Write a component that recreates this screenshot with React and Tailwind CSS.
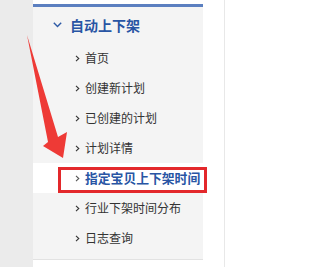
import React from "react";

const items = [
  "首页",
  "创建新计划",
  "已创建的计划",
  "计划详情",
  "指定宝贝上下架时间",
  "行业下架时间分布",
  "日志查询",
];

function Chevron({ color = "#333" }) {
  return (
    <svg width="5" height="7" viewBox="0 0 5 7" className="shrink-0">
      <path d="M1 0.8 L3.8 3.5 L1 6.2" fill="none" stroke={color} strokeWidth="1.1" />
    </svg>
  );
}

export default function App() {
  return (
    <div
      className="relative flex w-[225px] h-[267px] overflow-hidden bg-white"
      style={{ fontFamily: '"Noto Sans CJK SC", "Noto Sans", sans-serif' }}
    >
      <div className="w-[33px] h-full bg-[#ebebeb]" />
      <div className="w-[170px] h-full flex flex-col">
        <div className="h-[4px] bg-white" />
        <div className="h-[3px] bg-[#5b7fc0]" />
        <div className="bg-[#f4f4f4] flex flex-col pb-[6px] border-b border-[#e2e2e2]">
          <div className="h-[36px] flex items-center pl-[20px] gap-[8px]">
            <svg width="9" height="6" viewBox="0 0 9 6" className="shrink-0">
              <path d="M0.8 0.8 L4.5 4.6 L8.2 0.8" fill="none" stroke="#2d5aa6" strokeWidth="1.4" />
            </svg>
            <span className="text-[14px] leading-none font-bold text-[#2855a4]">自动上下架</span>
          </div>
          {items.map((t, i) => {
            const active = i === 4;
            return (
              <div
                key={t}
                className={`h-[30px] flex items-center pl-[42px] gap-[5px] ${active ? "bg-white" : ""}`}
              >
                <Chevron color={active ? "#555" : "#333"} />
                <span
                  className={
                    active
                      ? "text-[12.8px] leading-none font-bold text-[#2855a4] whitespace-nowrap"
                      : "text-[12px] leading-none text-[#333] whitespace-nowrap"
                  }
                >
                  {t}
                </span>
              </div>
            );
          })}
        </div>
        <div className="flex-1 bg-white" />
      </div>
      <div className="flex-1 h-full bg-white border-r border-[#e8e8e8]" />

      <div className="absolute left-[58px] top-[167px] w-[149px] h-[26px] border-[3px] border-[#e3282b]" />
      <svg className="absolute left-0 top-0" width="225" height="267" viewBox="0 0 225 267">
        <polygon
          points="27,35 58,137 67,132 63,158 43,146 48,142"
          fill="#ee3a36"
        />
      </svg>
    </div>
  );
}
